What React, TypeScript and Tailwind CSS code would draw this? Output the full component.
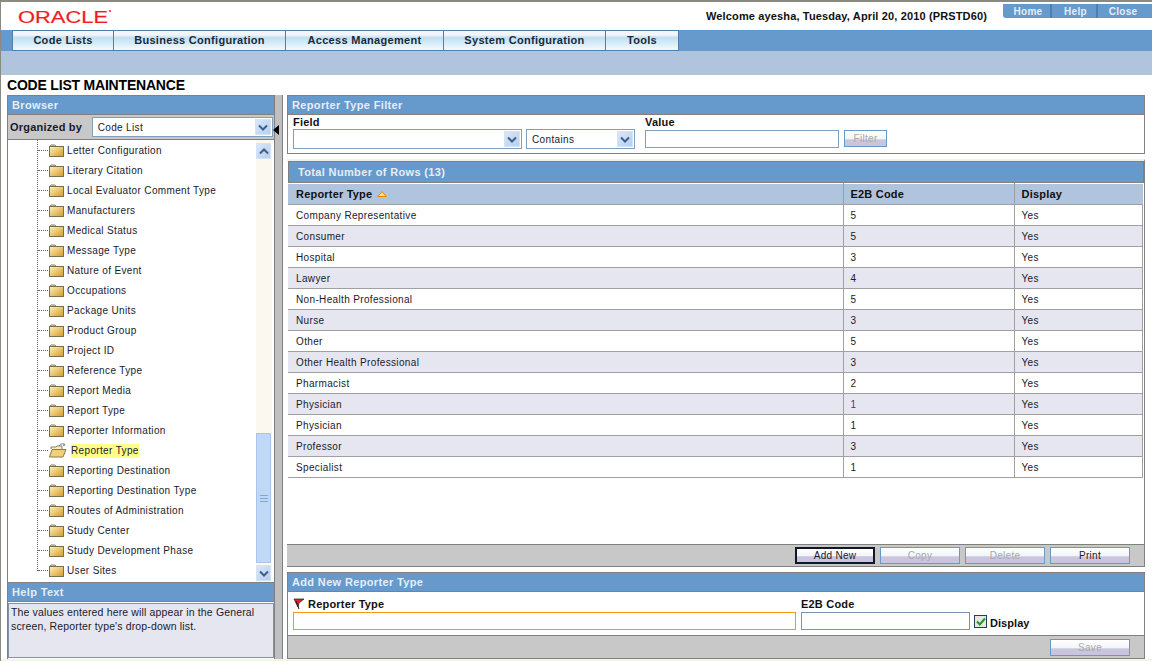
import type { FC, ReactNode } from "react";

const font = "font-['Liberation_Sans',Arial,sans-serif]";

const tabs = [
  { label: "Code Lists", width: "w-[102px]" },
  { label: "Business Configuration", width: "w-[172px]" },
  { label: "Access Management", width: "w-[158px]" },
  { label: "System Configuration", width: "w-[162px]" },
  { label: "Tools", width: "w-[73px]" },
];

const treeItems = [
  "Letter Configuration",
  "Literary Citation",
  "Local Evaluator Comment Type",
  "Manufacturers",
  "Medical Status",
  "Message Type",
  "Nature of Event",
  "Occupations",
  "Package Units",
  "Product Group",
  "Project ID",
  "Reference Type",
  "Report Media",
  "Report Type",
  "Reporter Information",
  "Reporter Type",
  "Reporting Destination",
  "Reporting Destination Type",
  "Routes of Administration",
  "Study Center",
  "Study Development Phase",
  "User Sites",
];

const rows = [
  ["Company Representative", "5"],
  ["Consumer", "5"],
  ["Hospital", "3"],
  ["Lawyer", "4"],
  ["Non-Health Professional", "5"],
  ["Nurse", "3"],
  ["Other", "5"],
  ["Other Health Professional", "3"],
  ["Pharmacist", "2"],
  ["Physician", "1"],
  ["Physician", "1"],
  ["Professor", "3"],
  ["Specialist", "1"],
];

const Chevron: FC<{ up?: boolean }> = ({ up }) => (
  <svg width="10" height="7" viewBox="0 0 10 7" fill="none">
    <path
      d={up ? "M1 5.5 5 1.5 9 5.5" : "M1 1.5 5 5.5 9 1.5"}
      stroke="#3f5f86"
      strokeWidth="2"
    />
  </svg>
);

const ArrowBox: FC<{ up?: boolean; className?: string }> = ({ up, className = "" }) => (
  <span
    className={`flex shrink-0 items-center justify-center border border-[#d4e3f5] bg-gradient-to-br from-[#d9e7f9] to-[#b6cff0] ${className}`}
  >
    <Chevron up={up} />
  </span>
);

const Folder: FC = () => (
  <svg width="16" height="13" viewBox="0 0 16 13" className="shrink-0">
    <defs>
      <linearGradient id="folderFill" x1="0" y1="0" x2="1" y2="1">
        <stop offset="0" stopColor="#fff3c0" />
        <stop offset="1" stopColor="#d49a22" />
      </linearGradient>
    </defs>
    <path d="M1 2.5 2 1h4l1 1.5" fill="#e8d9a8" stroke="#8c8468" />
    <rect x="0.5" y="2.5" width="14" height="10" fill="url(#folderFill)" stroke="#77704f" />
  </svg>
);

const OpenFolder: FC = () => (
  <svg width="18" height="15" viewBox="0 0 18 15" className="shrink-0">
    <path d="M2 6V4h5l1-1h5v3" fill="#fbeeb8" stroke="#8c8468" />
    <path d="M10 3c1-2 3-2.500 5-2" fill="none" stroke="#5f7f9f" />
    <path d="M15 0.500 16 2l-2 .5" fill="none" stroke="#5f7f9f" />
    <path d="M0.500 14 3 6.500h14L14 14Z" fill="#f3cf78" stroke="#8c7a48" />
  </svg>
);

const PanelHeader: FC<{ children: ReactNode; className?: string }> = ({ children, className = "" }) => (
  <div
    className={`flex h-[19px] shrink-0 items-center bg-[#6699cc] text-[11px] font-bold tracking-[0.35px] text-[#e6edf6] ${className}`}
  >
    {children}
  </div>
);

const Button: FC<{ label: string; disabled?: boolean; strong?: boolean; className?: string }> = ({
  label,
  disabled,
  strong,
  className = "w-[80px]",
}) => (
  <span
    className={`flex h-[17px] items-center justify-center border bg-[linear-gradient(#ffffff_0%,#f4f4fa_50%,#c9c5dc_60%,#c9c5dc_100%)] text-[10px] tracking-[0.3px] ${className} ${
      strong ? "border-2 border-[#101828]" : "border-[#6699cc]"
    } ${disabled ? "text-[#a9a9a9]" : "text-[#1a1a2a]"}`}
  >
    {label}
  </span>
);

const SelectBox: FC<{ value?: string; className: string; valueClass?: string }> = ({
  value = "",
  className,
  valueClass = "",
}) => (
  <div className={`flex h-[20px] items-center border border-[#7f9fbf] bg-white pl-[5px] pr-[1px] text-[10px] tracking-[0.35px] text-[#1a1a2a] ${className}`}>
    <span className={`flex-1 ${valueClass}`}>{value}</span>
    <ArrowBox className="h-[16px] w-[16px]" />
  </div>
);

const Tree: FC = () => (
  <div className="flex h-[442px] bg-white">
    <div className="relative flex-1 overflow-hidden">
      <div className="absolute bottom-[11px] left-[29px] top-0 border-l border-dotted border-[#666]" />
      {treeItems.map((item) => {
        const selected = item === "Reporter Type";
        return (
          <div key={item} className="flex h-[20px] items-center pl-[30px] text-[10px] tracking-[0.35px] text-[#1a1a2a] first:mt-[1px]">
            <span className="mr-[1px] w-[10px] border-t border-dotted border-[#666]" />
            {selected ? (
              <>
                <OpenFolder />
                <span className="ml-[4px] mt-[1px] h-[14px] bg-[#ffff88] leading-[14px]">{item}</span>
              </>
            ) : (
              <>
                <Folder />
                <span className="ml-[2px]">{item}</span>
              </>
            )}
          </div>
        );
      })}
    </div>
    <div className="mr-[2px] flex w-[16px] flex-col bg-[#fbf8f0] pt-[3px]">
      <ArrowBox up className="h-[16px] w-[15px]" />
      <div className="h-[274px]" />
      <div className="relative flex h-[130px] w-[15px] items-center justify-center border border-[#a9c6ea] bg-[#c0d8f8]">
        <span className="h-[7px] w-[8px] border-y border-[#7fa6d8] bg-[linear-gradient(#c0d8f8_40%,#7fa6d8_40%,#7fa6d8_60%,#c0d8f8_60%)]" />
      </div>
      <ArrowBox className="mt-[2px] h-[16px] w-[15px]" />
    </div>
  </div>
);

const LeftPanel: FC = () => (
  <div className="flex h-full w-[268px] shrink-0 flex-col border border-[#808080] border-b-0">
    <PanelHeader className="border-b border-[#808080] pl-[4px]">Browser</PanelHeader>
    <div className="flex h-[25px] shrink-0 items-center border-b border-[#808080] bg-[#c8c8c8] pl-[2px] pr-[1px]">
      <span className="w-[82px] text-[11px] font-bold tracking-[0.2px] text-[#1a1a2a]">Organized by</span>
      <SelectBox value="Code List" className="w-[182px]" />
    </div>
    <Tree />
    <PanelHeader className="h-[20px] border-y border-[#808080] pl-[4px]">Help Text</PanelHeader>
    <div className="mt-[1px] h-[55px] border border-[#7f93ab] bg-[#e6e6f0] px-[2px] pt-[1px] text-[10.5px] leading-[14px] tracking-[0.15px] text-[#1a1a2a]">
      The values entered here will appear in the General
      <br />
      screen, Reporter type's drop-down list.
    </div>
  </div>
);

const FilterPanel: FC = () => (
  <div className="h-[59px] shrink-0 border border-[#808080]">
    <PanelHeader className="border-b border-[#808080] pl-[4px]">Reporter Type Filter</PanelHeader>
    <div className="flex items-end pl-[5px] text-[11px] font-bold leading-[14px] text-[#111]">
      <div className="flex w-[233px] flex-col">
        <span className="h-[14px] tracking-[0.2px]">Field</span>
        <SelectBox className="w-[229px] font-normal" />
      </div>
      <div className="flex w-[119px] flex-col">
        <SelectBox value="Contains" className="w-[109px] font-normal" valueClass="mt-[1px]" />
      </div>
      <div className="flex h-[34px] w-[199px] flex-col">
        <span className="h-[15px] tracking-[0.2px]">Value</span>
        <span className="h-[18px] w-[194px] border border-[#7f9fbf] bg-white" />
      </div>
      <Button label="Filter" disabled className="mb-[2px] w-[43px] pt-[1px] font-normal" />
    </div>
  </div>
);

const GridPanel: FC = () => (
  <div className="mt-[5px] flex h-[408px] shrink-0 flex-col border-t-2 border-r border-t-[#f2efe4] border-r-[#808080] pl-[1px]">
    <div className="flex h-[22px] shrink-0 items-center border border-[#808080] bg-[#6699cc] pl-[9px] text-[11px] font-bold tracking-[0.35px] text-[#e6edf6]">
      Total Number of Rows (13)
    </div>
    <table className="w-[855px] table-fixed border-collapse text-[10px] tracking-[0.35px] text-[#1a1a2a]">
      <thead>
        <tr className="h-[21px] bg-[#b0c4de] text-left text-[11px] font-bold tracking-[0.2px] text-[#111]">
          <th className="w-[555px] border-t border-r border-b border-t-white border-[#a0a0a0] pl-[8px]">
            <span className="flex items-center gap-[5px]">
              Reporter Type
              <svg width="10" height="6" viewBox="0 0 10 6">
                <path d="M5 .7 9.300 5.500H.7Z" fill="#ffdf70" stroke="#e88a00" />
              </svg>
            </span>
          </th>
          <th className="w-[171px] border-t border-r border-b border-t-white border-[#a0a0a0] pl-[7px]">E2B Code</th>
          <th className="border-t border-b border-t-white border-[#a0a0a0] pl-[7px]">Display</th>
        </tr>
      </thead>
      <tbody>
        {rows.map(([name, code], i) => (
          <tr key={i} className={`h-[21px] ${i % 2 === 1 ? "bg-[#e6e6f0]" : "bg-white"}`}>
            <td className="border-r border-b border-[#a0a0a0] pl-[8px]">{name}</td>
            <td className={`border-r border-b border-[#a0a0a0] pl-[7px] ${i === 9 ? "text-[#7a1a7a]" : ""}`}>{code}</td>
            <td className="border-r border-b border-[#a0a0a0] pl-[7px]">Yes</td>
          </tr>
        ))}
      </tbody>
    </table>
    <div className="flex-1" />
    <div className="-ml-[1px] flex h-[23px] shrink-0 items-center justify-end gap-[5px] border-y border-[#808080] bg-[#c8c8c8] pr-[14px]">
      <Button label="Add New" strong />
      <Button label="Copy" disabled />
      <Button label="Delete" disabled />
      <Button label="Print" />
    </div>
  </div>
);

const AddPanel: FC = () => (
  <div className="mt-[5px] flex h-[87px] shrink-0 flex-col border border-[#808080]">
    <PanelHeader className="border-b border-[#808080] pl-[4px]">Add New Reporter Type</PanelHeader>
    <div className="flex h-[44px] shrink-0 border-b border-[#808080] pl-[5px] pt-[5px] text-[11px] font-bold text-[#111]">
      <div className="flex w-[508px] flex-col">
        <span className="flex h-[14px] items-center gap-[3px] tracking-[0.2px]">
          <svg width="12" height="12" viewBox="0 0 12 12">
            <path d="M1 1h10L6 5 5 9Z" fill="#e8202a" stroke="#1a1a1a" strokeWidth="0.7" />
            <path d="M3 3l3 8" stroke="#1a1a1a" />
          </svg>
          Reporter Type
        </span>
        <span className="mt-[1px] h-[18px] w-[503px] border border-[#f39a14] bg-white" />
      </div>
      <div className="flex w-[173px] flex-col">
        <span className="flex h-[14px] items-center tracking-[0.2px]">E2B Code</span>
        <span className="mt-[1px] h-[18px] w-[169px] border border-[#7f93ab] bg-white" />
      </div>
      <div className="mt-[18px] flex h-[14px] items-start gap-[3px]">
        <span className="flex h-[13px] w-[13px] items-center justify-center border border-[#1f3f5f] bg-[#e8e8e0]">
          <svg width="10" height="9" viewBox="0 0 10 9" fill="none">
            <path d="M1 4.500 3.800 7.500 9 1.500" stroke="#1f9a2f" strokeWidth="2" />
          </svg>
        </span>
        <span className="mt-[1px] leading-[14px] tracking-[0.05px]">Display</span>
      </div>
    </div>
    <div className="flex flex-1 items-center justify-end bg-[#c8c8c8] pr-[14px]">
      <Button label="Save" disabled />
    </div>
  </div>
);

const App: FC = () => (
  <div className={`flex h-[661px] w-[1152px] flex-col overflow-hidden border-t-2 border-l border-t-[#8a8a80] border-l-[#8a8a80] bg-white ${font}`}>
    <header className="flex h-[28px] shrink-0 items-start justify-between">
      <div className="ml-[17px] mt-[6px]">
        <svg width="94" height="17" viewBox="0 0 94 17">
          <text
            x="0"
            y="14.500"
            textLength="90"
            lengthAdjust="spacingAndGlyphs"
            fontFamily="Liberation Sans, Arial, sans-serif"
            fontSize="17"
            fill="#f01c24"
            stroke="#f01c24"
            strokeWidth="0.2"
          >
            ORACLE
          </text>
          <circle cx="92" cy="3" r="1" fill="#f01c24" />
        </svg>
      </div>
      <div className="flex items-start">
        <span className="mr-[16px] mt-[8px] text-[11px] font-bold leading-[13px] tracking-[0.14px] text-[#111]">
          Welcome ayesha, Tuesday, April 20, 2010 (PRSTD60)
        </span>
        <nav className="mt-[2px] flex h-[14px] items-center rounded-bl-[3px] bg-[#6699cc] text-[10px] font-bold tracking-[0.3px] text-[#e6edf6]">
          <span className="flex h-full w-[49px] items-center justify-center border-r-2 border-[#4f7fae] pl-[3px]">Home</span>
          <span className="flex h-full w-[46px] items-center justify-center border-r-2 border-[#4f7fae] pl-[3px]">Help</span>
          <span className="flex h-full w-[54px] items-center justify-center pr-[4px]">Close</span>
        </nav>
      </div>
    </header>

    <nav className="flex h-[21px] shrink-0 bg-[#6699cc] pl-[11px]">
      {tabs.map((tab) => (
        <span
          key={tab.label}
          className={`flex h-full items-center justify-center border border-l-0 border-[#4f7fae] first:border-l bg-[linear-gradient(#f4f4fb_0%,#f4f4fb_20%,#bfe0f2_35%,#f4fafd_100%)] text-[11px] font-bold tracking-[0.3px] text-[#1a2a3a] ${tab.width}`}
        >
          {tab.label}
        </span>
      ))}
    </nav>
    <div className="h-[24px] shrink-0 bg-[#b0c4de]" />

    <h1 className="flex h-[20px] shrink-0 items-center pl-[6px] text-[14px] font-bold tracking-[-0.2px] text-black">
      CODE LIST MAINTENANCE
    </h1>

    <main className="flex h-[564px] shrink-0 pl-[6px]">
      <LeftPanel />
      <div className="relative h-full w-[8px] shrink-0 border-r border-[#808080] bg-[#c0c0c0]">
        <span className="absolute -left-[2px] top-[30px] h-0 w-0 border-y-[5px] border-r-[6px] border-y-transparent border-r-black" />
      </div>
      <section className="ml-[4px] flex w-[858px] shrink-0 flex-col">
        <FilterPanel />
        <GridPanel />
        <AddPanel />
      </section>
    </main>
    <div className="flex-1 bg-[#f5f2e8]" />
  </div>
);

export default App;
